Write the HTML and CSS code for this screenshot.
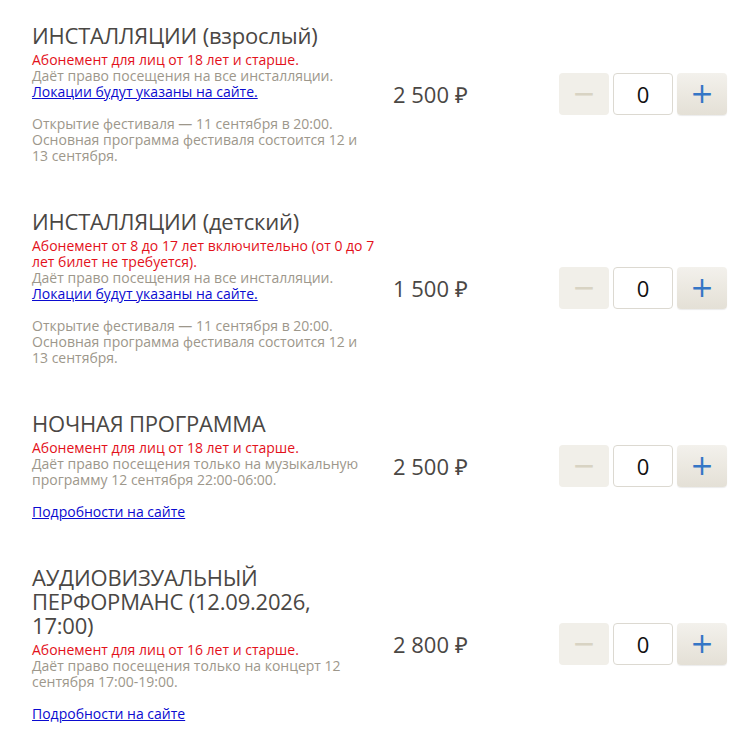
FILE: index.html
```html
<!DOCTYPE html>
<html lang="ru">
<head>
  <meta charset="UTF-8">
  <meta name="viewport" content="width=device-width, initial-scale=1.0">
  <link rel="stylesheet" href="styles.css">
  <title>Билеты</title>
</head>
<body>

  <div class="tickets">

    <div class="ticket">
      <div class="ticket-info">
        <div class="ticket-title">ИНСТАЛЛЯЦИИ (взрослый)</div>
        <div class="ticket-age">Абонемент для лиц от 18 лет и старше.</div>
        <div class="ticket-desc">Даёт право посещения на все инсталляции.<br><a href="#">Локации будут указаны на сайте.</a></div>
        <div class="ticket-desc ticket-note">Открытие фестиваля — 11 сентября в 20:00.<br>Основная программа фестиваля состоится 12 и 13 сентября.</div>
      </div>
      <div class="ticket-price">2 500 ₽</div>
      <div class="counter">
        <button class="counter-btn minus">&minus;</button>
        <input class="counter-input" type="text" value="0">
        <button class="counter-btn plus">+</button>
      </div>
    </div>

    <div class="ticket">
      <div class="ticket-info">
        <div class="ticket-title">ИНСТАЛЛЯЦИИ (детский)</div>
        <div class="ticket-age">Абонемент от 8 до 17 лет включительно (от 0 до 7 лет билет не требуется).</div>
        <div class="ticket-desc">Даёт право посещения на все инсталляции.<br><a href="#">Локации будут указаны на сайте.</a></div>
        <div class="ticket-desc ticket-note">Открытие фестиваля — 11 сентября в 20:00.<br>Основная программа фестиваля состоится 12 и 13 сентября.</div>
      </div>
      <div class="ticket-price">1 500 ₽</div>
      <div class="counter">
        <button class="counter-btn minus">&minus;</button>
        <input class="counter-input" type="text" value="0">
        <button class="counter-btn plus">+</button>
      </div>
    </div>

    <div class="ticket">
      <div class="ticket-info">
        <div class="ticket-title">НОЧНАЯ ПРОГРАММА</div>
        <div class="ticket-age">Абонемент для лиц от 18 лет и старше.</div>
        <div class="ticket-desc">Даёт право посещения только на музыкальную программу 12 сентября 22:00-06:00.</div>
        <div class="ticket-desc ticket-note"><a href="#">Подробности на сайте</a></div>
      </div>
      <div class="ticket-price">2 500 ₽</div>
      <div class="counter">
        <button class="counter-btn minus">&minus;</button>
        <input class="counter-input" type="text" value="0">
        <button class="counter-btn plus">+</button>
      </div>
    </div>

    <div class="ticket">
      <div class="ticket-info">
        <div class="ticket-title">АУДИОВИЗУАЛЬНЫЙ ПЕРФОРМАНС (12.09.2026, 17:00)</div>
        <div class="ticket-age">Абонемент для лиц от 16 лет и старше.</div>
        <div class="ticket-desc">Даёт право посещения только на концерт 12 сентября 17:00-19:00.</div>
        <div class="ticket-desc ticket-note"><a href="#">Подробности на сайте</a></div>
      </div>
      <div class="ticket-price">2 800 ₽</div>
      <div class="counter">
        <button class="counter-btn minus">&minus;</button>
        <input class="counter-input" type="text" value="0">
        <button class="counter-btn plus">+</button>
      </div>
    </div>

  </div>

</body>
</html>
```

FILE: styles.css
```css
body {
  font-family: 'Open Sans', Arial, sans-serif;
  margin: 0;
  padding: 0;
  background-color: #fff;
}

.tickets {
  padding: 23px 28px 0 32px;
}

.ticket {
  display: flex;
  align-items: center;
  margin-bottom: 45px;
}

.ticket-info {
  width: 343px;
  flex-shrink: 0;
}

.ticket-title {
  font-size: 22px;
  line-height: 24px;
  letter-spacing: -0.2px;
  color: #4a4744;
  margin-bottom: 5px;
}

.ticket-age {
  font-size: 14px;
  line-height: 16px;
  color: #e3111b;
}

.ticket-desc {
  font-size: 14px;
  line-height: 16px;
  color: #9d978b;
}

.ticket-note {
  margin-top: 16px;
}

.ticket-desc a {
  color: #0b0bd0;
  text-decoration: underline;
}

.ticket-price {
  width: 167px;
  padding-left: 18px;
  font-size: 22px;
  color: #4a4744;
}

.counter {
  display: flex;
  gap: 4px;
  margin-left: auto;
}

.counter-btn {
  width: 50px;
  height: 42px;
  border: none;
  border-radius: 4px;
  font-family: 'DejaVu Sans', sans-serif;
  font-size: 28px;
  line-height: 1;
  padding: 0;
  cursor: pointer;
}

.counter-btn.minus {
  background-color: #f1efe9;
  color: #d8d3c3;
}

.counter-btn.plus {
  background: linear-gradient(to bottom, #f3f1ec, #e4e0d6);
  color: #3576c6;
  box-shadow: 0 1px 1px rgba(0, 0, 0, 0.08);
}

.counter-input {
  width: 60px;
  height: 42px;
  box-sizing: border-box;
  border: 1px solid #dcd9d1;
  border-radius: 4px;
  text-align: center;
  font-family: 'Open Sans', Arial, sans-serif;
  font-size: 22px;
  color: #111;
}
```
